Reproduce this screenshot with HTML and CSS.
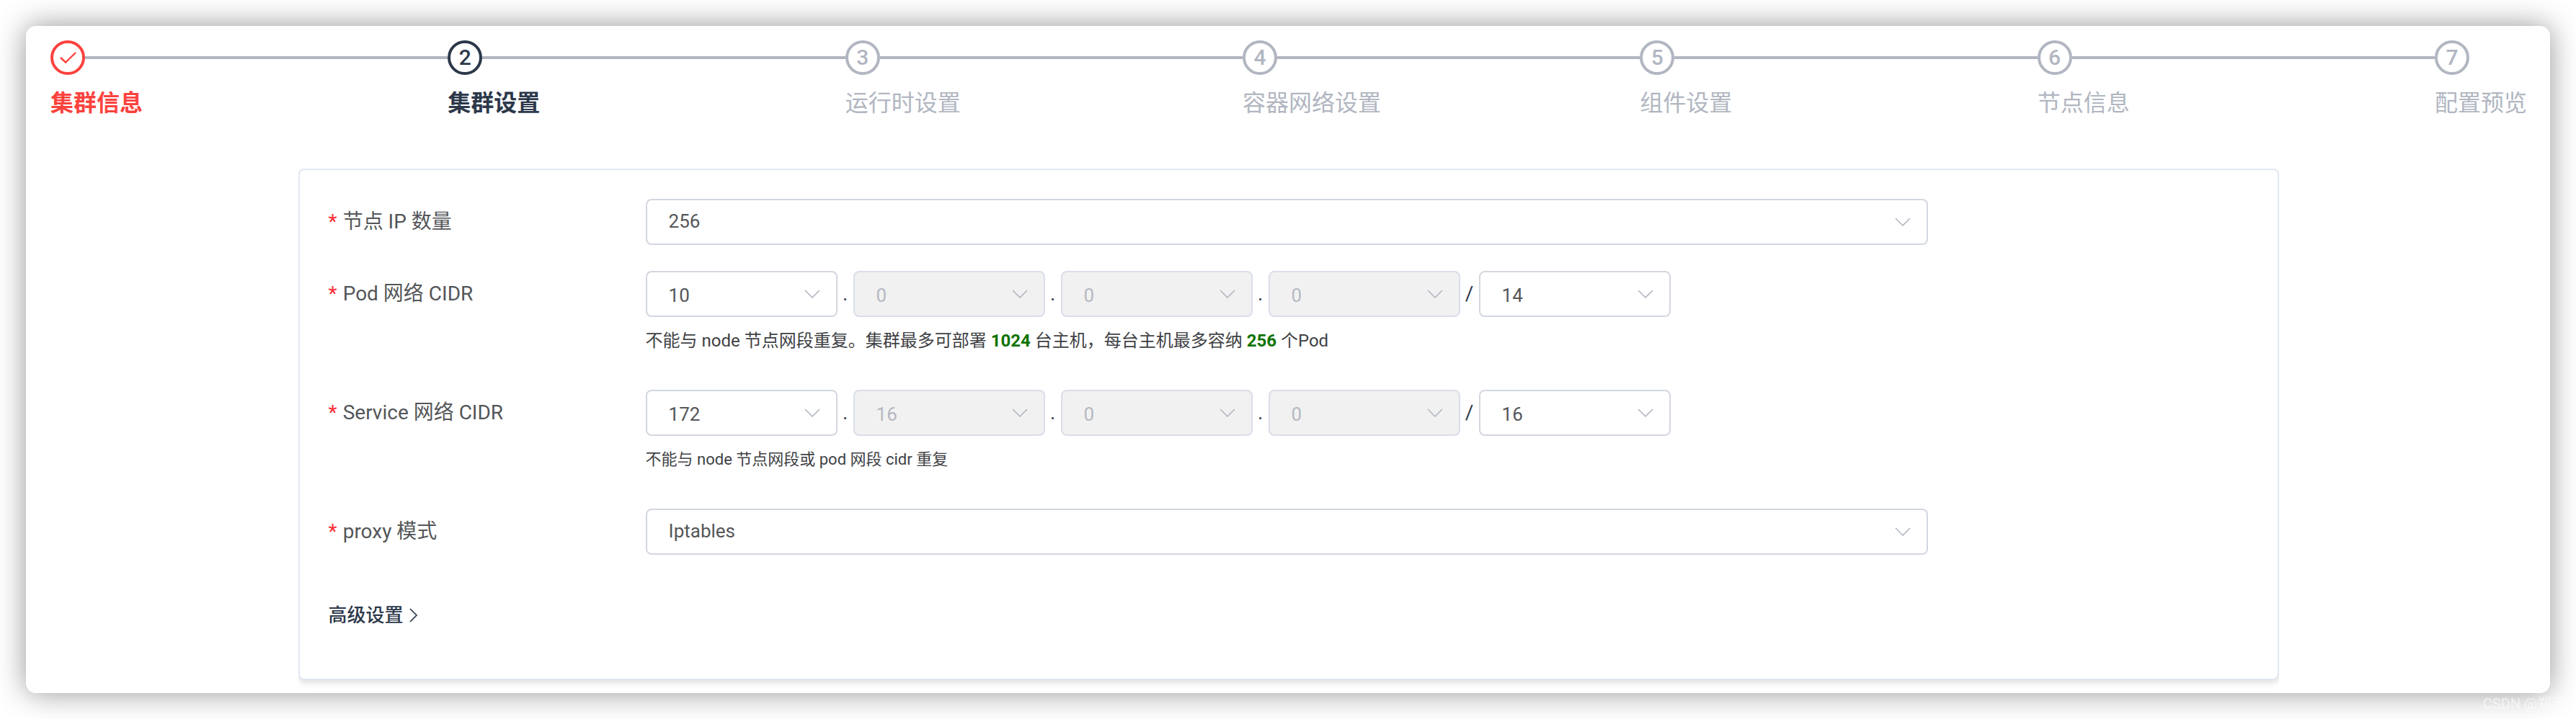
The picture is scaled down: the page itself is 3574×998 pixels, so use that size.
FILE: index.html
```html
<!DOCTYPE html>
<html lang="zh-CN">
<head>
<meta charset="utf-8">
<meta name="viewport" content="width=device-width, initial-scale=1">
<title>集群设置</title>
<link rel="stylesheet" href="styles.css">
</head>
<body>
<svg class="sprite" aria-hidden="true">
  <symbol id="chevron-down" viewBox="0 0 22 12"><path d="M1 1 11 11 21 1" fill="none" stroke="currentColor" stroke-width="1.6"/></symbol>
</svg>
<main class="card">
  <ol class="steps">
    <li class="step step-done"><span class="step-icon"><svg class="check" viewBox="0 0 24 18" aria-hidden="true"><path d="M2 9 9 15.500 23 2" fill="none" stroke="currentColor" stroke-width="2.400"/></svg></span><span class="step-title">集群信息</span></li>
    <li class="step step-current" aria-current="step"><span class="step-icon">2</span><span class="step-title">集群设置</span></li>
    <li class="step"><span class="step-icon">3</span><span class="step-title">运行时设置</span></li>
    <li class="step"><span class="step-icon">4</span><span class="step-title">容器网络设置</span></li>
    <li class="step"><span class="step-icon">5</span><span class="step-title">组件设置</span></li>
    <li class="step"><span class="step-icon">6</span><span class="step-title">节点信息</span></li>
    <li class="step"><span class="step-icon">7</span><span class="step-title">配置预览</span></li>
  </ol>

  <div class="panel-wrap">
    <form class="panel">
      <div class="row">
        <label class="label" for="ip-count">节点 IP 数量</label>
        <div class="control">
          <div class="select select-wide"><select id="ip-count"><option>256</option></select><svg class="arrow"><use href="#chevron-down"/></svg></div>
        </div>
      </div>

      <div class="row row-help">
        <label class="label" for="pod-1">Pod 网络 CIDR</label>
        <div class="control">
          <div class="cidr">
            <div class="select octet"><select id="pod-1"><option>10</option></select><svg class="arrow"><use href="#chevron-down"/></svg></div>
            <span class="dot">.</span>
            <div class="select octet"><select aria-label="Pod 2" disabled><option>0</option></select><svg class="arrow"><use href="#chevron-down"/></svg></div>
            <span class="dot">.</span>
            <div class="select octet"><select aria-label="Pod 3" disabled><option>0</option></select><svg class="arrow"><use href="#chevron-down"/></svg></div>
            <span class="dot">.</span>
            <div class="select octet"><select aria-label="Pod 4" disabled><option>0</option></select><svg class="arrow"><use href="#chevron-down"/></svg></div>
            <span class="slash">/</span>
            <div class="select octet"><select aria-label="Pod 掩码"><option>14</option></select><svg class="arrow"><use href="#chevron-down"/></svg></div>
          </div>
          <p class="help">不能与 node 节点网段重复。集群最多可部署 <b>1024</b> 台主机，每台主机最多容纳 <b>256</b> 个Pod</p>
        </div>
      </div>

      <div class="row row-help">
        <label class="label" for="svc-1">Service 网络 CIDR</label>
        <div class="control">
          <div class="cidr">
            <div class="select octet"><select id="svc-1"><option>172</option></select><svg class="arrow"><use href="#chevron-down"/></svg></div>
            <span class="dot">.</span>
            <div class="select octet"><select aria-label="Service 2" disabled><option>16</option></select><svg class="arrow"><use href="#chevron-down"/></svg></div>
            <span class="dot">.</span>
            <div class="select octet"><select aria-label="Service 3" disabled><option>0</option></select><svg class="arrow"><use href="#chevron-down"/></svg></div>
            <span class="dot">.</span>
            <div class="select octet"><select aria-label="Service 4" disabled><option>0</option></select><svg class="arrow"><use href="#chevron-down"/></svg></div>
            <span class="slash">/</span>
            <div class="select octet"><select aria-label="Service 掩码"><option>16</option></select><svg class="arrow"><use href="#chevron-down"/></svg></div>
          </div>
          <p class="help help-small">不能与 node 节点网段或 pod 网段 cidr 重复</p>
        </div>
      </div>

      <div class="row">
        <label class="label" for="proxy">proxy 模式</label>
        <div class="control">
          <div class="select select-wide"><select id="proxy"><option>Iptables</option></select><svg class="arrow"><use href="#chevron-down"/></svg></div>
        </div>
      </div>

      <button class="advanced" type="button">高级设置<svg class="caret" viewBox="0 0 12 20" aria-hidden="true"><path d="M1 1 10 10 1 19" fill="none" stroke="currentColor" stroke-width="1.7"/></svg></button>
    </form>
  </div>
</main>
<span class="watermark">CSDN @郑清</span>
</body>
</html>
```
FILE: styles.css
```css
* { box-sizing: border-box; }

body {
  margin: 0;
  padding: 36px;
  background: #fff;
  color: #2c384a;
  font-family: Roboto, "Noto Sans CJK SC", sans-serif;
  font-size: 28px;
}

.sprite { position: absolute; width: 0; height: 0; }

.card {
  padding: 20px 32px 0 34px;
  border-radius: 14px;
  background: #fff;
  box-shadow: 0 0 42px rgba(0, 0, 0, 0.42);
}

/* Step bar */
.steps {
  display: flex;
  margin: 0 0 68px;
  padding: 0;
  list-style: none;
}

.step {
  position: relative;
  display: flex;
  flex: 1;
  flex-direction: column;
  gap: 16px;
  color: #b1b6c1;
}

.step:last-child { flex: none; }

.step:not(:last-child)::before {
  content: "";
  position: absolute;
  top: 22px;
  left: 48px;
  right: 0;
  height: 4px;
  background: #b1b6c1;
}

.step-icon {
  display: flex;
  align-items: center;
  justify-content: center;
  width: 48px;
  height: 48px;
  border: 4px solid currentColor;
  border-radius: 50%;
  font-size: 30px;
  font-weight: 500;
  line-height: 40px;
}

.check { width: 24px; height: 18px; }

.step-title { font-size: 32px; line-height: 46px; white-space: nowrap; }

.step-done { color: #fb423d; }
.step-current { color: #2c384a; }
.step-done .step-title,
.step-current .step-title { font-weight: 700; }

/* Form panel */
.panel-wrap {
  width: 80%;
  margin: 0 auto;
  padding-bottom: 18px;
  overflow: hidden;
}

.panel {
  padding: 40px 40px 70px;
  border: 2px solid #e1e6f2;
  border-radius: 8px;
  background: #fff;
  box-shadow: 0 4px 8px rgba(0, 0, 0, 0.12);
}

.row {
  display: grid;
  grid-template-columns: 440px 1fr;
  margin-bottom: 36px;
}

.row-help { margin-bottom: 50px; }

.label { color: #545659; line-height: 64px; }
.label::before { content: "*"; margin-right: 8px; color: #fb2c36; }

.select { position: relative; }
.select-wide { width: 80%; }
.octet { width: 266px; }

.select select {
  display: block;
  width: 100%;
  height: 64px;
  padding: 0 60px 2px 30px;
  border: 2px solid #d3d7df;
  border-radius: 8px;
  background: #fff;
  color: #545659;
  font: inherit;
  font-size: 26px;
  appearance: none;
}

.select select:disabled {
  border-color: #dadeea;
  background: #f1f1f1;
  color: #b5b9c2;
  opacity: 1;
}

.arrow {
  position: absolute;
  top: 26px;
  right: 24px;
  width: 22px;
  height: 12px;
  color: #b1b6c1;
  pointer-events: none;
}

.cidr { display: flex; line-height: 64px; }
.dot { width: 22px; text-align: center; }
.slash { width: 26px; text-align: center; }

.help {
  margin: 15px 0 0;
  color: #404144;
  font-size: 24px;
  line-height: 36px;
}

.help-small { font-size: 22px; }
.help b { color: #107300; }

.advanced {
  display: flex;
  align-items: center;
  gap: 8px;
  margin-top: 66px;
  padding: 0;
  border: 0;
  background: none;
  color: #2c384a;
  font: inherit;
  font-size: 26px;
  font-weight: 500;
  line-height: 36px;
}

.caret { width: 12px; height: 20px; }

.watermark {
  position: absolute;
  right: 14px;
  bottom: 8px;
  color: rgba(255, 255, 255, 0.6);
  font-size: 20px;
  line-height: 26px;
}
```
